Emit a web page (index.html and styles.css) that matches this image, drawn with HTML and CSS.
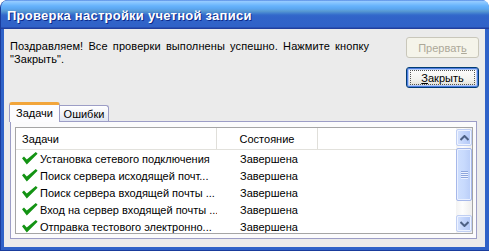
FILE: index.html
```html
<!DOCTYPE html>
<html lang="ru">
<head>
<meta charset="utf-8">
<title>Проверка настройки учетной записи</title>
<link rel="stylesheet" href="styles.css">
</head>
<body>
<div class="window">
  <div class="titlebar"><span class="title">Проверка настройки учетной записи</span></div>
  <div class="client">
    <div class="top">
      <p class="msg">Поздравляем! Все проверки выполнены успешно. Нажмите кнопку<br>"Закрыть".</p>
      <div class="buttons">
        <button class="btn disabled" type="button">Прерват<u>ь</u></button>
        <button class="btn default" type="button"><span class="focus"><u>З</u>акрыть</span></button>
      </div>
    </div>
    <div class="tabs">
      <div class="tabstrip">
        <div class="tab active">Задачи</div>
        <div class="tab inactive">Ошибки</div>
      </div>
      <div class="panel">
        <div class="list">
          <div class="table">
            <div class="head">
              <div class="hcell c1">Задачи</div>
              <div class="hcell c2">Состояние</div>
              <div class="hcell c3"></div>
            </div>
            <div class="row"><div class="cell c1"><svg class="check" viewBox="0 0 16 13"><path d="M0 6.2 L2 4.4 L4.8 7.6 L13.8 0 L15.6 1.8 L4.8 12.6 Z"/></svg>Установка сетевого подключения</div><div class="cell c2">Завершена</div></div>
            <div class="row"><div class="cell c1"><svg class="check" viewBox="0 0 16 13"><path d="M0 6.2 L2 4.4 L4.8 7.6 L13.8 0 L15.6 1.8 L4.8 12.6 Z"/></svg>Поиск сервера исходящей почт...</div><div class="cell c2">Завершена</div></div>
            <div class="row"><div class="cell c1"><svg class="check" viewBox="0 0 16 13"><path d="M0 6.2 L2 4.4 L4.8 7.6 L13.8 0 L15.6 1.8 L4.8 12.6 Z"/></svg>Поиск сервера входящей почты ...</div><div class="cell c2">Завершена</div></div>
            <div class="row"><div class="cell c1"><svg class="check" viewBox="0 0 16 13"><path d="M0 6.2 L2 4.4 L4.8 7.6 L13.8 0 L15.6 1.8 L4.8 12.6 Z"/></svg>Вход на сервер входящей почты ...</div><div class="cell c2">Завершена</div></div>
            <div class="row"><div class="cell c1"><svg class="check" viewBox="0 0 16 13"><path d="M0 6.2 L2 4.4 L4.8 7.6 L13.8 0 L15.6 1.8 L4.8 12.6 Z"/></svg>Отправка тестового электронно...</div><div class="cell c2">Завершена</div></div>
          </div>
          <div class="scrollbar">
            <div class="sbtn"><svg viewBox="0 0 9 6" class="arrow"><path d="M0.5 5 L4.5 1 L8.5 5" /></svg></div>
            <div class="track">
              <div class="thumb"><span class="grip"></span><span class="grip"></span><span class="grip"></span><span class="grip"></span></div>
            </div>
            <div class="sbtn"><svg viewBox="0 0 9 6" class="arrow"><path d="M0.5 1 L4.5 5 L8.5 1" /></svg></div>
          </div>
        </div>
      </div>
    </div>
  </div>
</div>
</body>
</html>
```
FILE: styles.css
```css
html, body {
  margin: 0;
  padding: 0;
  background: #ffffff;
}
body {
  font-family: "Liberation Sans", Arial, sans-serif;
  font-size: 11px;
  color: #000;
}
.window {
  width: 489px;
  height: 251px;
  display: flex;
  flex-direction: column;
  background: #2f62c8;
  border-radius: 8px 8px 0 0;
  box-sizing: border-box;
  border-left: 1px solid #1a3c9c;
  border-bottom: 1px solid #1a3c9c;
}
.titlebar {
  height: 29px;
  flex: none;
  display: flex;
  align-items: center;
  padding: 2px 0 0 6px;
  box-sizing: border-box;
  border-radius: 7px 7px 0 0;
  background: linear-gradient(to bottom, #3a6fd8 0px, #99ccff 1px, #84c4ff 3px, #66b2fb 6px, #5ba6f0 9px, #5a9bd2 11px, #4483d0 13px, #3369cb 15px, #3164c9 17px, #3062c8 27px, #213f9e 28px, #213f9e 29px);
}
.title {
  font-family: "Liberation Sans", Arial, sans-serif;
  font-weight: bold;
  font-size: 13px;
  color: #ffffff;
  text-shadow: 1px 1px 0 #0c2a8a;
  letter-spacing: 0.25px;
}
.client {
  flex: 1;
  margin: 0 4px 3px 3px;
  background: #ebebeb;
  padding: 8px 6px 0 6px;
  display: flex;
  flex-direction: column;
  min-height: 0;
}
.top {
  display: flex;
  align-items: flex-start;
}
.msg {
  flex: 1;
  margin: 3px 0 0 0;
  line-height: 13px;
  white-space: nowrap;
  word-spacing: 2px;
  letter-spacing: 0.1px;
}
.buttons {
  width: 73px;
  display: flex;
  flex-direction: column;
  gap: 9px;
}
.btn {
  height: 21px;
  width: 73px;
  padding: 0;
  font-family: "Liberation Sans", Arial, sans-serif;
  font-size: 11px;
  border-radius: 3px;
  box-sizing: border-box;
  display: flex;
  align-items: center;
  justify-content: center;
}
.btn.disabled {
  color: #aca899;
  background: #f5f4ea;
  border: 1px solid #c9c7ba;
}
.btn.default {
  color: #000;
  border: 1px solid #003c74;
  background: linear-gradient(to bottom, #ffffff 0%, #f3f3ef 60%, #dcd9cd 100%);
  box-shadow: inset 0 0 0 1px #4f7ddf, inset 0 0 0 2px #b2cbf7;
}
.focus {
  display: flex;
  align-items: center;
  justify-content: center;
  width: 65px;
  height: 15px;
  box-sizing: border-box;
  border: 1px dotted #555;
}
.tabs {
  margin: 14px 2px 0 0;
  display: flex;
  flex-direction: column;
}
.tabstrip {
  height: 19px;
  display: flex;
  align-items: flex-end;
  position: relative;
  z-index: 1;
}
.tab {
  box-sizing: border-box;
  display: flex;
  align-items: center;
  justify-content: center;
}
.tab.active {
  width: 51px;
  height: 20px;
  margin: 0 0 -1px -1px;
  background: #fcfcfe;
  border: 1px solid #9c9dc6;
  border-bottom: none;
  border-top: 3px solid #f2a53a;
  border-radius: 3px 3px 0 0;
  padding-bottom: 2px;
}
.tab.inactive {
  width: 49px;
  height: 16px;
  margin-bottom: 0;
  background: linear-gradient(to bottom, #ffffff 0%, #f1f3f8 50%, #dfe5f2 100%);
  border: 1px solid #9c9dc6;
  border-bottom: none;
  border-left: none;
  border-radius: 0 3px 0 0;
  padding-top: 1px;
}
.panel {
  height: 118px;
  box-sizing: border-box;
  border: 1px solid #9c9dc6;
  background: #fbfbfc;
  padding: 5px 3px 4px 4px;
}
.list {
  height: 107px;
  box-sizing: border-box;
  border: 1px solid #a5a5a5;
  background: #ffffff;
  display: flex;
  overflow: hidden;
}
.table {
  flex: 1;
  overflow: hidden;
}
.head {
  display: flex;
  height: 22px;
  box-sizing: border-box;
  border-bottom: 1px solid #e2e1dc;
  background: #ffffff;
}
.hcell {
  display: flex;
  align-items: center;
  box-sizing: border-box;
  position: relative;
}
.hcell.c1 {
  width: 201px;
  padding-left: 6px;
  border-right: 1px solid #e0dfda;
}
.hcell.c2 {
  width: 101px;
  justify-content: center;
  border-right: 1px solid #e0dfda;
}
.hcell.c3 {
  flex: 1;
}
.row {
  display: flex;
  height: 17px;
  align-items: center;
}
.cell {
  white-space: nowrap;
  overflow: hidden;
  display: flex;
  align-items: center;
}
.cell.c1 {
  width: 201px;
  padding-left: 6px;
  box-sizing: border-box;
}
.cell.c2 {
  width: 101px;
  padding-left: 23px;
  box-sizing: border-box;
}
.check {
  width: 16px;
  height: 13px;
  margin-right: 2px;
  flex: none;
  fill: #139313;
}
.scrollbar {
  width: 16px;
  flex: none;
  display: flex;
  flex-direction: column;
  background: linear-gradient(to right, #f3f3f3, #fdfdfd 40%, #eeeeee);
  padding: 1px 0 1px 0;
  box-sizing: border-box;
}
.sbtn {
  height: 17px;
  flex: none;
  box-sizing: border-box;
  border: 1px solid #c0cff3;
  border-radius: 2px;
  background: linear-gradient(to right, #d7e3fd, #c2d4fb 50%, #b3c8f6);
  display: flex;
  align-items: center;
  justify-content: center;
  box-shadow: inset 0 0 0 1px #eef3ff;
}
.arrow {
  width: 9px;
  height: 6px;
  fill: none;
  stroke: #4d6185;
  stroke-width: 2;
}
.track {
  flex: 1;
  padding-top: 2px;
}
.thumb {
  height: 53px;
  box-sizing: border-box;
  border: 1px solid #a6b8ea;
  border-radius: 2px;
  background: linear-gradient(to right, #cfdffe, #c8dafd 50%, #b9cdf8);
  box-shadow: inset 0 0 0 1px #eaf0ff;
  display: flex;
  flex-direction: column;
  align-items: center;
  justify-content: center;
  gap: 1px;
}
.grip {
  width: 7px;
  height: 1px;
  background: #8ea6dc;
  border-bottom: 1px solid #eef3ff;
  display: block;
  margin-bottom: -1px;
}
```
